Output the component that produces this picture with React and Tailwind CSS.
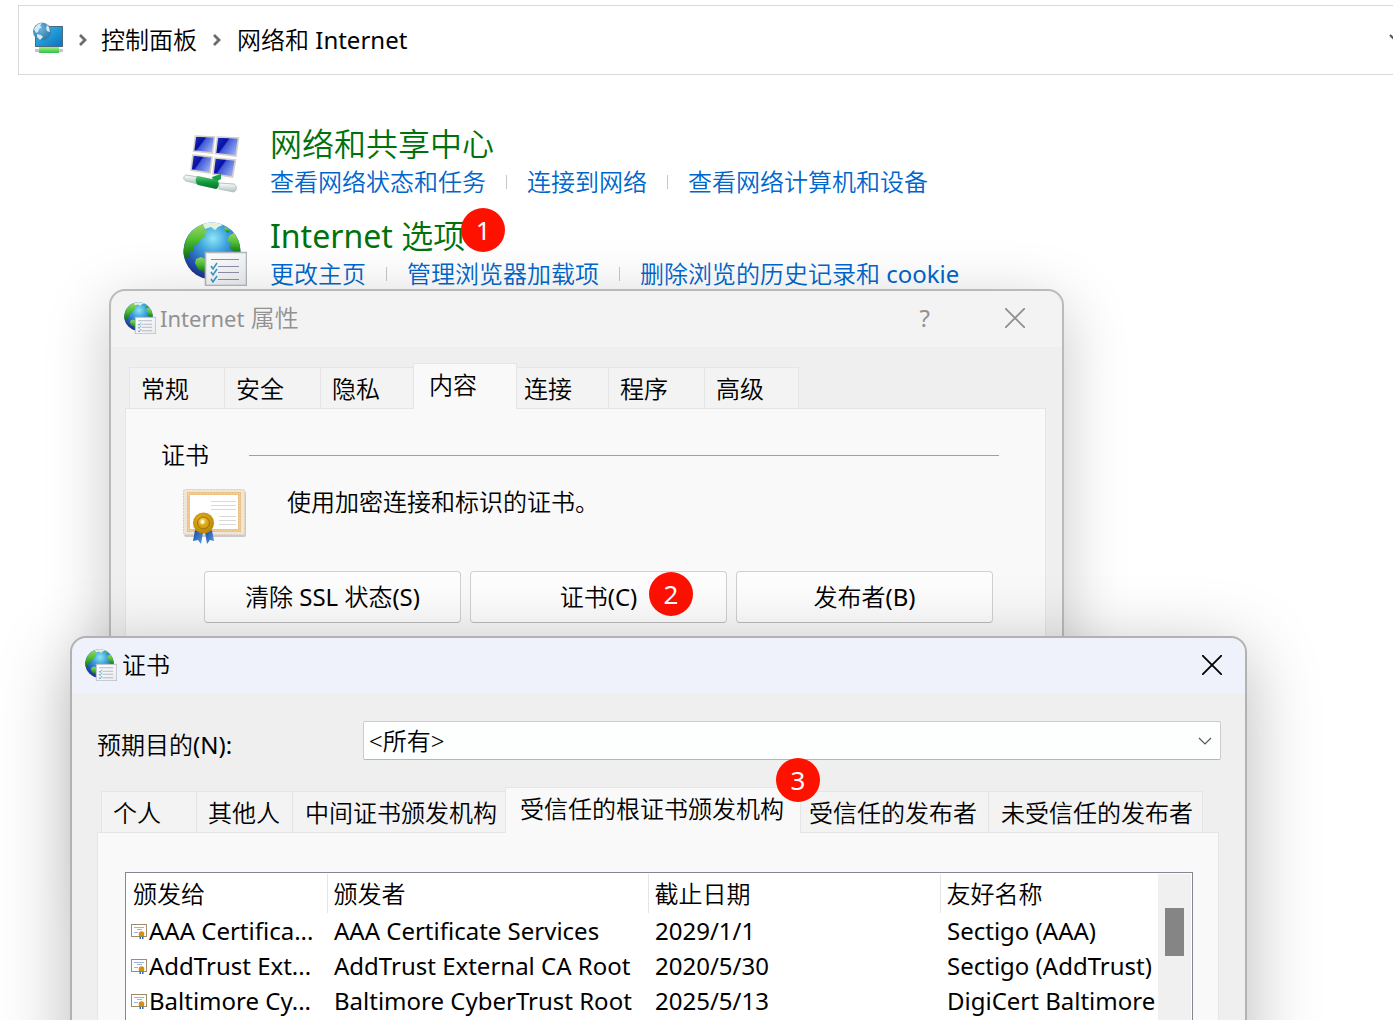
import React, { useId } from "react";

function GlobeListIcon({ className }) {
  const id = useId();
  const ocean = `${id}ocean`;
  const land = `${id}land`;
  const clip = `${id}clip`;
  const paper = `${id}paper`;
  return (
    <svg viewBox="0 0 64 64" className={className} aria-hidden="true">
      <defs>
        <radialGradient id={ocean} cx="0.52" cy="0.28" r="0.72">
          <stop offset="0" stopColor="#8fe6f8" />
          <stop offset="0.35" stopColor="#3fa2dd" />
          <stop offset="0.75" stopColor="#2454b4" />
          <stop offset="1" stopColor="#1c2f86" />
        </radialGradient>
        <linearGradient id={land} x1="0" y1="0" x2="0" y2="1">
          <stop offset="0" stopColor="#9bd46a" />
          <stop offset="0.45" stopColor="#4fc02e" />
          <stop offset="1" stopColor="#0b6a1c" />
        </linearGradient>
        <linearGradient id={paper} x1="0" y1="0" x2="1" y2="1">
          <stop offset="0" stopColor="#ffffff" />
          <stop offset="1" stopColor="#e9ebef" />
        </linearGradient>
        <clipPath id={clip}>
          <circle cx="29" cy="29" r="28.5" />
        </clipPath>
      </defs>
      <circle cx="29" cy="29" r="28.5" fill={`url(#${ocean})`} />
      <g clipPath={`url(#${clip})`} fill={`url(#${land})`}>
        <path d="M3 19C6 9 13 4 20 2l3 2-2 3 4 2-4 3 2 2-6 4-2 4-5 2 1 5-5 1 1 5-5 2-3-7z" />
        <path d="M13 37l5-2 4 2v14l-7-4-3-6z" />
        <path d="M47 13l4-2 5 8 2 10-3 3-5-3-4-4 3-4-4-1 0-4z" />
        <path d="M42 5l5 3-2 3-4-3z" />
        <path d="M20 2c7-3 15-2 20 1l-5 2-3 3-4-3-6 2z" fill="#e4f2dc" />
      </g>
      <rect x="22.5" y="30.5" width="41" height="33" fill={`url(#${paper})`} stroke="#b4b9be" strokeWidth="1.6" />
      <path d="M28 37.500h28M35 44.500h21M35 50.500h21M35 57.500h21" stroke="#8e8ea8" strokeWidth="1.2" />
      <path d="M28 44l2 3 4-6M28 50l2 3 4-6M28 57l2 3 4-6" fill="none" stroke="#3495cb" strokeWidth="1.5" />
    </svg>
  );
}

function NetworkCenterIcon({ className }) {
  return (
    <svg viewBox="0 0 58 60" className={className} aria-hidden="true">
      <defs>
        <linearGradient id="pane" x1="0" y1="0.2" x2="1" y2="0.8">
          <stop offset="0" stopColor="#1c2cc0" />
          <stop offset="0.36" stopColor="#0710a2" />
          <stop offset="0.42" stopColor="#4058d6" />
          <stop offset="1" stopColor="#a5baf4" />
        </linearGradient>
        <linearGradient id="tube" x1="0" y1="0" x2="0" y2="1">
          <stop offset="0" stopColor="#ffffff" />
          <stop offset="1" stopColor="#aebfc0" />
        </linearGradient>
        <linearGradient id="greenTube" x1="0" y1="0" x2="0" y2="1">
          <stop offset="0" stopColor="#5cc777" />
          <stop offset="0.5" stopColor="#119a3b" />
          <stop offset="1" stopColor="#08702a" />
        </linearGradient>
      </defs>
      <g fill="url(#pane)" stroke="#d5d0c8" strokeWidth="1.6">
        <path d="M12.500 2l19 1-2 16-19-2z" />
        <path d="M34.500 3l21 1-2.500 18-20.500-2.500z" />
        <path d="M10 21l19 2-2 16-19-3z" />
        <path d="M32 24l20.500 2-3 17-19.500-3z" />
      </g>
      <path d="M29 43l9-3v5l-7 4z" fill="#16a043" />
      <path d="M3 41l12 2v7L3 47c-3-1-3-5 0-6z" fill="url(#tube)" stroke="#b5c4c2" />
      <path d="M36 49l15 1c3 1 3 7 0 8l-15-3z" fill="url(#tube)" stroke="#b5c4c2" />
      <path d="M15 42l19 4c3 2 2 8-1 9l-18-4c-3-2-3-8 0-9z" fill="url(#greenTube)" />
    </svg>
  );
}

function NetworkPlaceIcon({ className }) {
  return (
    <svg viewBox="0 0 32 32" className={className} aria-hidden="true">
      <defs>
        <linearGradient id="monitor" x1="0" y1="0" x2="1" y2="1">
          <stop offset="0" stopColor="#35c3e8" />
          <stop offset="1" stopColor="#0d6fc0" />
        </linearGradient>
        <radialGradient id="smallGlobe" cx="0.4" cy="0.35" r="0.7">
          <stop offset="0" stopColor="#6db9dc" />
          <stop offset="1" stopColor="#2f73a8" />
        </radialGradient>
        <linearGradient id="cable" x1="0" y1="0" x2="0" y2="1">
          <stop offset="0" stopColor="#a5f07e" />
          <stop offset="1" stopColor="#2fbf4a" />
        </linearGradient>
      </defs>
      <rect x="2.500" y="4.500" width="27" height="20" fill="url(#monitor)" stroke="#4b6b80" />
      <rect x="2" y="27" width="28" height="3" fill="#c3c6c6" />
      <rect x="6" y="25" width="20" height="6" fill="url(#cable)" />
      <circle cx="9" cy="9.500" r="9" fill="url(#smallGlobe)" />
      <path d="M1 7c2-4 5-6 8-6l-2 3 2 1-3 2-1 3-2 1z" fill="#d6ecf4" />
      <path d="M4 12l4 1 2 2-3 3-3-3zM13 2l3 3 1 5-3-1-1-3 1-2z" fill="#d6ecf4" />
    </svg>
  );
}

function CertificateIcon({ className }) {
  return (
    <svg viewBox="0 0 66 58" className={className} aria-hidden="true">
      <defs>
        <radialGradient id="seal" cx="0.45" cy="0.4" r="0.6">
          <stop offset="0" stopColor="#f8e38a" />
          <stop offset="0.35" stopColor="#dba91c" />
          <stop offset="1" stopColor="#b88404" />
        </radialGradient>
        <linearGradient id="ribbon" x1="0" y1="0" x2="1" y2="1">
          <stop offset="0" stopColor="#174a9c" />
          <stop offset="1" stopColor="#5a9be6" />
        </linearGradient>
      </defs>
      <rect x="2" y="3" width="62" height="46" rx="2" fill="#a8a8a8" opacity="0.6" />
      <rect x="1" y="1" width="62" height="46" rx="2" fill="#f0e6d8" />
      <rect x="1.500" y="1.500" width="61" height="45" rx="2" fill="none" stroke="#d9cfc2" strokeDasharray="2 1" />
      <rect x="6.500" y="5.500" width="51" height="37" fill="none" stroke="#ecc083" strokeWidth="3" />
      <rect x="6.500" y="5.500" width="51" height="37" fill="none" stroke="#f8e2bd" strokeWidth="1.500" strokeDasharray="1 2" />
      <rect x="8" y="7" width="48" height="34" fill="#ffffff" />
      <path d="M29 13.500h25M29 17.500h25M29 21.500h25M37 28.500h17M37 32.500h17M37 36.500h17" stroke="#d9d9dc" />
      <path d="M13 42l8 3-2 11-3-4-5 1z" fill="url(#ribbon)" />
      <path d="M23 44l7-2 2 11-4-1-3 4z" fill="url(#ribbon)" />
      <circle cx="21.500" cy="35" r="10.500" fill="url(#seal)" />
      <circle cx="21.500" cy="35" r="6" fill="none" stroke="#9c6d05" />
      <circle cx="20.500" cy="34" r="2" fill="#fff3c4" />
    </svg>
  );
}

function CertificateRowIcon() {
  return (
    <svg viewBox="0 0 16 16" className="h-4 w-4 shrink-0" aria-hidden="true">
      <rect x="0.500" y="1.500" width="15" height="12" fill="#ffffff" stroke="#a08c6c" />
      <path d="M3 4.500h10M6 6.500h5M3 9.500h4" stroke="#8d9ad2" strokeWidth="0.8" />
      <path d="M8.500 12h1.500v4H8.500zM11 12h1.500v4H11z" fill="#2b62d8" />
      <circle cx="10.500" cy="11" r="2.800" fill="#cf930c" />
    </svg>
  );
}

function Crumb() {
  return (
    <svg viewBox="0 0 8 12" className="h-3 w-2" aria-hidden="true">
      <path d="M1 1l5 5-5 5" fill="none" stroke="#6b6b6b" strokeWidth="2.800" />
    </svg>
  );
}

function CloseButton({ className }) {
  return (
    <button type="button" aria-label="关闭" className={className}>
      <svg viewBox="0 0 20 20" className="h-5 w-5" aria-hidden="true">
        <path d="M0 0l20 20M20 0L0 20" fill="none" stroke="currentColor" strokeWidth="1.800" />
      </svg>
    </button>
  );
}

function Latin({ children, className = "" }) {
  return <span className={`font-normal ${className}`}>{children}</span>;
}

function Badge({ children, className = "" }) {
  return (
    <span className={`flex h-11 w-11 items-center justify-center rounded-full bg-[#ff1100] text-[26px] leading-8 font-normal text-white ${className}`}>
      {children}
    </span>
  );
}

function Category({ icon, title, badge, links }) {
  return (
    <section className="flex">
      <div className="w-[87px] shrink-0 pt-1.5">{icon}</div>
      <div className="min-w-0">
        <div className="flex h-10 items-center">
          <h2 className="text-[32px] leading-10 text-[#00720c]">
            <a href="#category">{title}</a>
          </h2>
          {badge}
        </div>
        <ul className="flex h-9 items-center text-2xl leading-9 text-[#0066cc]">
          {links.map((link, i) => (
            <li key={i} className="flex items-center">
              {i > 0 && <span className="mx-5 h-3.5 w-px bg-[#c8c8c8]" />}
              <a href="#task" className="whitespace-nowrap">{link}</a>
            </li>
          ))}
        </ul>
      </div>
    </section>
  );
}

function Tab({ active = false, className = "", children }) {
  return (
    <button
      type="button"
      role="tab"
      aria-selected={active}
      className={
        active
          ? `relative -mb-px h-[46px] border border-b-0 border-[#e5e5e5] bg-[#f9f9f9] pb-1 text-left whitespace-nowrap ${className}`
          : `h-[41px] border-t border-r border-[#e5e5e5] bg-[#f3f3f3] pt-0.5 text-left whitespace-nowrap ${className}`
      }
    >
      {children}
    </button>
  );
}

function PushButton({ children }) {
  return (
    <button type="button" className="relative h-[52px] flex-1 rounded border border-[#d0d0d0] border-b-[#bcbcbc] bg-[#fdfdfd]">
      {children}
    </button>
  );
}

function InternetProperties() {
  return (
    <section aria-label="Internet 属性" className="absolute top-[289px] left-[109px] h-[600px] w-[955px] rounded-2xl border-2 border-[#bababa] bg-[#efefef] shadow-[0_16px_64px_rgba(0,0,0,0.22)]">
      <header className="flex h-14 items-center rounded-t-2xl bg-[#f3f3f3] pr-[37px] pb-0.5 pl-[13px] text-[#919191]">
        <GlobeListIcon className="mr-1 h-8 w-8" />
        <h1><Latin className="text-[22px]">Internet</Latin> 属性</h1>
        <button type="button" aria-label="帮助" className="mr-[75px] ml-auto font-normal">?</button>
        <CloseButton className="text-[#8f8f8f]" />
      </header>
      <div className="pt-4 pr-4 pl-3.5">
        <div role="tablist" className="flex items-end pl-1">
          <Tab className="w-24 border-l pl-[11px]">常规</Tab>
          <Tab className="w-24 pl-[11px]">安全</Tab>
          <Tab className="w-[92px] border-r-0 pl-[11px]">隐私</Tab>
          <Tab active className="w-[104px] pl-[15px]">内容</Tab>
          <Tab className="w-[92px] pl-[7px]">连接</Tab>
          <Tab className="w-24 pl-[11px]">程序</Tab>
          <Tab className="w-[94px] pl-[11px]">高级</Tab>
        </div>
        <div role="tabpanel" className="h-[480px] border border-[#e5e5e5] bg-[#f9f9f9] pt-7 pr-[46px] pl-[35px]">
          <div className="flex items-center gap-10">
            <h2 className="leading-9">证书</h2>
            <hr className="flex-1 border-[#a0a0a0]" />
          </div>
          <div className="mt-[11px] flex pl-[21px]">
            <CertificateIcon className="mt-1 mr-[39px] h-[58px] w-[66px]" />
            <p className="leading-9">使用加密连接和标识的证书。</p>
          </div>
          <div className="mt-[25px] flex gap-[9px] pr-1.5 pl-[43px]">
            <PushButton>清除<Latin> SSL </Latin>状态<Latin>(S)</Latin></PushButton>
            <PushButton>
              证书<Latin>(C)</Latin>
              <Badge className="absolute top-0 right-[33px]">2</Badge>
            </PushButton>
            <PushButton>发布者<Latin>(B)</Latin></PushButton>
          </div>
        </div>
      </div>
    </section>
  );
}

const certificates = [
  ["AAA Certifica...", "AAA Certificate Services", "2029/1/1", "Sectigo (AAA)"],
  ["AddTrust Ext...", "AddTrust External CA Root", "2020/5/30", "Sectigo (AddTrust)"],
  ["Baltimore Cy...", "Baltimore CyberTrust Root", "2025/5/13", "DigiCert Baltimore"],
];

function CertificateTable() {
  return (
    <div className="flex h-[300px] border border-[#828790] bg-white p-px">
      <div className="min-w-0 flex-1 overflow-hidden">
        <table className="w-full table-fixed text-left whitespace-nowrap">
          <colgroup>
            <col className="w-[200px]" />
            <col className="w-[321px]" />
            <col className="w-[292px]" />
            <col />
          </colgroup>
          <thead>
            <tr className="h-[39px]">
              {["颁发给", "颁发者", "截止日期", "友好名称"].map((name, i) => (
                <th key={name} scope="col" className={i < 3 ? "border-r border-[#e5e5e5] p-0 pl-1.5 font-[350]" : "p-0 pl-1.5 font-[350]"}>
                  {name}
                </th>
              ))}
            </tr>
          </thead>
          <tbody className="font-normal">
            {certificates.map((row) => (
              <tr key={row[0]} className="h-[35px] leading-[35px]">
                <td className="p-0 pl-1">
                  <div className="flex items-center gap-0.5">
                    <CertificateRowIcon />
                    {row[0]}
                  </div>
                </td>
                <td className="p-0 pl-[7px]">{row[1]}</td>
                <td className="p-0 pl-[7px]">{row[2]}</td>
                <td className="overflow-hidden p-0 pl-[7px]">{row[3]}</td>
              </tr>
            ))}
          </tbody>
        </table>
      </div>
      <div className="w-[33px] bg-[#f0f0f0] pt-[34px] pl-[7px]">
        <div className="h-12 w-[19px] bg-[#858585]" />
      </div>
    </div>
  );
}

function Certificates() {
  return (
    <section aria-label="证书" className="absolute top-[636px] left-[70px] h-[600px] w-[1177px] rounded-2xl border-2 border-[#b2b2b2] bg-[#efefef] shadow-[0_16px_72px_rgba(0,0,0,0.28)]">
      <header className="flex h-14 items-center rounded-t-2xl bg-[#eff2fb] pr-[23px] pb-0.5 pl-[13px]">
        <GlobeListIcon className="mr-[5px] h-8 w-8" />
        <h1 className="flex-1">证书</h1>
        <CloseButton className="text-black" />
      </header>
      <div className="px-[25px] pt-[27px]">
        <div className="-mr-px flex h-[39px] items-center">
          <label htmlFor="purpose" className="w-[266px] pt-2">预期目的<Latin>(N):</Latin></label>
          <div className="relative flex-1">
            <select id="purpose" className="block h-[39px] w-full appearance-none rounded-xs border border-[#cccccc] border-b-[#b5b5b5] bg-[#fdfefe] pl-[5px] leading-8">
              <option>&lt;所有&gt;</option>
            </select>
            <svg viewBox="0 0 14 8" className="pointer-events-none absolute top-4 right-[9px] h-2 w-3.5" aria-hidden="true">
              <path d="M1 1l6 6 6-6" fill="none" stroke="#555555" strokeWidth="1.200" />
            </svg>
          </div>
        </div>
        <div role="tablist" className="mt-[27px] flex items-end pl-1">
          <Tab className="w-24 border-l pl-[11px]">个人</Tab>
          <Tab className="w-24 pl-[11px]">其他人</Tab>
          <Tab className="w-[212px] border-r-0 pl-3">中间证书颁发机构</Tab>
          <Tab active className="w-[296px] pl-3.5">
            受信任的根证书颁发机构
            <Badge className="absolute -top-[30px] -right-5">3</Badge>
          </Tab>
          <Tab className="w-[188px] pl-2">受信任的发布者</Tab>
          <Tab className="w-[214px] pl-3">未受信任的发布者</Tab>
        </div>
        <div role="tabpanel" className="mr-px h-[480px] border border-[#e5e5e5] bg-[#f9f9f9] pt-[39px] pr-[25px] pl-[27px]">
          <CertificateTable />
        </div>
      </div>
    </section>
  );
}

export default function App() {
  return (
    <main className="relative h-screen overflow-hidden bg-white pt-[5px] font-['Noto_Sans','Noto_Sans_CJK_SC',sans-serif] text-2xl leading-8 font-[350] text-black">
      <nav aria-label="地址栏" className="ml-[18px] flex h-[70px] items-center overflow-hidden border border-r-0 border-[#d9d9d9] pl-3.5">
        <NetworkPlaceIcon className="mr-3.5 mb-1 h-8 w-8" />
        <Crumb />
        <a href="#panel" className="mr-4 ml-3.5">控制面板</a>
        <Crumb />
        <a href="#network" className="ml-4">网络和<Latin> Internet</Latin></a>
        <svg viewBox="0 0 14 8" className="-mr-2.5 mb-1 ml-auto h-2 w-3.5" aria-hidden="true">
          <path d="M1 1l6 6 6-6" fill="none" stroke="#555555" strokeWidth="2" />
        </svg>
      </nav>
      <div className="mt-[49px] flex flex-col gap-4 pl-[183px]">
        <Category
          icon={<NetworkCenterIcon className="mt-1 h-[60px] w-[58px]" />}
          title="网络和共享中心"
          links={["查看网络状态和任务", "连接到网络", "查看网络计算机和设备"]}
        />
        <Category
          icon={<GlobeListIcon className="h-16 w-16" />}
          title={<><Latin>Internet </Latin>选项</>}
          badge={<Badge className="mb-3 -ml-1">1</Badge>}
          links={["更改主页", "管理浏览器加载项", <>删除浏览的历史记录和<Latin> cookie</Latin></>]}
        />
      </div>
      <InternetProperties />
      <Certificates />
    </main>
  );
}
